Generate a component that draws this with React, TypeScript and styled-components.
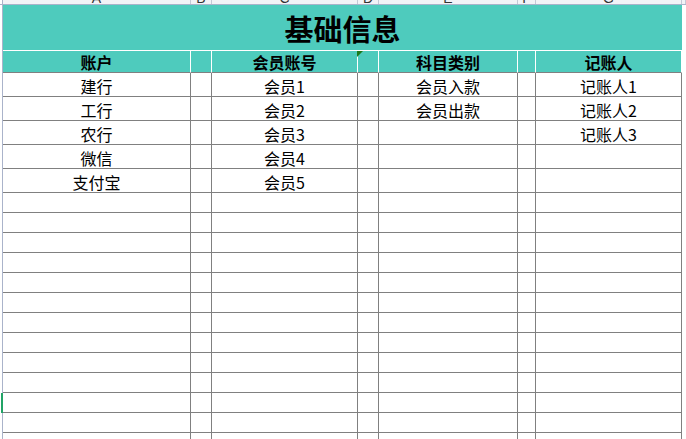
import React from "react";
import styled, { createGlobalStyle } from "styled-components";

const Global = createGlobalStyle`
  html, body { margin: 0; padding: 0; background: #ffffff; }
  body { font-family: "Noto Sans CJK SC", "Noto Sans", sans-serif; }
`;

const TEAL = "#4ecbbd";
const GRID = "#808080";
const GUTTER_LINE = "#aab3ca";
const SELECT = "#21a366";

const COLS = [188, 21, 146, 21, 139, 18, 146];
const LETTERS = ["A", "B", "C", "D", "E", "F", "G"];

const Sheet = styled.div`
  width: 686px;
  height: 439px;
  overflow: hidden;
  display: flex;
  flex-direction: column;
  background: #fff;
`;

const Row = styled.div`
  display: flex;
  flex-shrink: 0;
`;

const Gutter = styled.div<{ $selected?: boolean; $h: number }>`
  width: 2px;
  height: ${(p) => p.$h}px;
  flex-shrink: 0;
  border-right: 1px solid ${(p) => (p.$selected ? SELECT : GUTTER_LINE)};
  background: ${(p) =>
    p.$selected ? `linear-gradient(to right, #ffffff 0 1px, ${SELECT} 1px 2px)` : "#ffffff"};
`;

const StripRow = styled(Row)`
  height: 4px;
  background: #f2f3f7;
  border-bottom: 1px solid ${GUTTER_LINE};
`;

const StripCell = styled.div<{ $w: number }>`
  width: ${(p) => p.$w - 1}px;
  height: 4px;
  border-right: 1px solid #c4c9d6;
  display: flex;
  justify-content: center;
  align-items: flex-end;
  overflow: hidden;
  flex-shrink: 0;
`;

const StripLetter = styled.span`
  font-family: "Liberation Sans", sans-serif;
  font-size: 14px;
  line-height: 14px;
  color: #333;
  margin-bottom: -1px;
`;

const StripRest = styled.div`
  flex: 1;
  height: 4px;
  border-right: 1px solid #c4c9d6;
`;

const Title = styled.div`
  width: 679px;
  height: 45px;
  background: ${TEAL};
  border-bottom: 1px solid #ffffff;
  display: flex;
  align-items: center;
  justify-content: center;
  font-size: 29px;
  font-weight: 700;
  color: #000;
`;

const HeadCell = styled.div<{ $w: number }>`
  position: relative;
  width: ${(p) => p.$w - 1}px;
  height: 21px;
  background: ${TEAL};
  border-right: 1px solid #ffffff;
  border-bottom: 1px solid ${GRID};
  display: flex;
  align-items: center;
  justify-content: center;
  font-size: 16px;
  font-weight: 700;
  line-height: 16px;
  color: #000;
  flex-shrink: 0;
`;

const Flag = styled.span`
  position: absolute;
  top: 0;
  right: -6px;
  width: 0;
  height: 0;
  border-top: 6px solid #1b7a1b;
  border-right: 6px solid transparent;
  z-index: 2;
`;

const Cell = styled.div<{ $w: number; $h: number }>`
  width: ${(p) => p.$w - 1}px;
  height: ${(p) => p.$h - 1}px;
  border-right: 1px solid ${GRID};
  border-bottom: 1px solid ${GRID};
  display: flex;
  align-items: flex-end;
  justify-content: center;
  font-size: 16px;
  line-height: 16px;
  color: #000;
  flex-shrink: 0;
  overflow: hidden;
`;

const CellText = styled.span`
  margin-bottom: 2px;
`;

const headers = ["账户", "", "会员账号", "", "科目类别", "", "记账人"];

const colA = ["建行", "工行", "农行", "微信", "支付宝"];
const colC = ["会员1", "会员2", "会员3", "会员4", "会员5"];
const colE = ["会员入款", "会员出款"];
const colG = ["记账人1", "记账人2", "记账人3"];

const ROWS = 19;

export default function App() {
  const rows = Array.from({ length: ROWS }, (_, i) => [
    colA[i] ?? "",
    "",
    colC[i] ?? "",
    "",
    colE[i] ?? "",
    "",
    colG[i] ?? "",
  ]);
  return (
    <>
      <Global />
      <Sheet>
        <StripRow>
          <Gutter $h={4} />
          {COLS.map((w, i) => (
            <StripCell key={i} $w={w}>
              <StripLetter>{LETTERS[i]}</StripLetter>
            </StripCell>
          ))}
          <StripRest />
        </StripRow>
        <Row>
          <Gutter $h={46} />
          <Title>基础信息</Title>
        </Row>
        <Row>
          <Gutter $h={22} />
          {COLS.map((w, i) => (
            <HeadCell key={i} $w={w}>
              {headers[i]}
              {i === 2 && <Flag />}
            </HeadCell>
          ))}
        </Row>
        {rows.map((r, ri) => {
          const h = ri < 5 ? 24 : 20;
          return (
            <Row key={ri}>
              <Gutter $h={h} $selected={ri === 15} />
              {COLS.map((w, ci) => (
                <Cell key={ci} $w={w} $h={h}>
                  <CellText>{r[ci]}</CellText>
                </Cell>
              ))}
            </Row>
          );
        })}
      </Sheet>
    </>
  );
}
